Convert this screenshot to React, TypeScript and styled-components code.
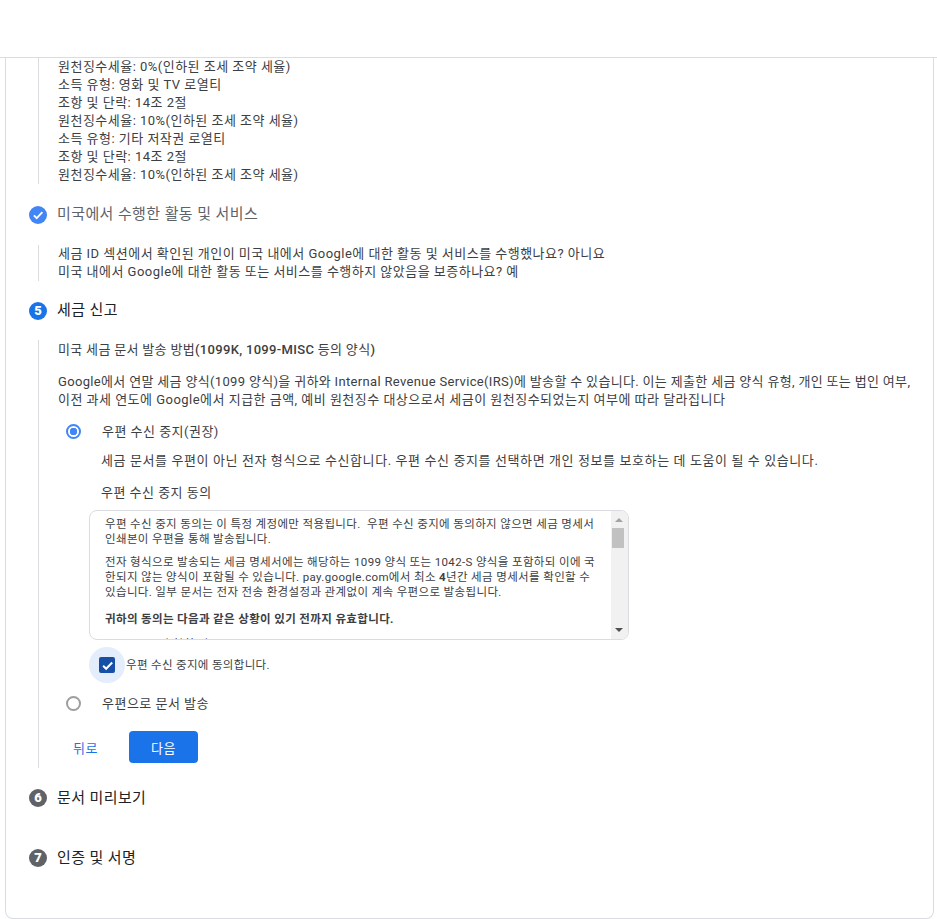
import React from "react";
import styled, { createGlobalStyle } from "styled-components";

const GlobalStyle = createGlobalStyle`
  html, body {
    margin: 0;
    padding: 0;
    background: #fff;
  }
  body {
    font-family: Roboto, "Noto Sans CJK KR", sans-serif;
    font-size: 13px;
    color: #3c4043;
  }
`;

const taxLines = [
  "원천징수세율: 0%(인하된 조세 조약 세율)",
  "소득 유형: 영화 및 TV 로열티",
  "조항 및 단락: 14조 2절",
  "원천징수세율: 10%(인하된 조세 조약 세율)",
  "소득 유형: 기타 저작권 로열티",
  "조항 및 단락: 14조 2절",
  "원천징수세율: 10%(인하된 조세 조약 세율)",
];

const CheckMark = ({ size }: { size: number }) => (
  <svg width={size} height={size} viewBox="0 0 24 24" fill="none">
    <path d="M5 12.5l4.8 4.8L19.5 7.2" stroke="#fff" strokeWidth="3.2" />
  </svg>
);

export default function App() {
  return (
    <Page>
      <GlobalStyle />
      <TopBar />
      <Card>
        <Rail $height={126}>
          {taxLines.map((line, i) => (
            <Line key={i}>{line}</Line>
          ))}
        </Rail>

        <StepHeader $top={22} $bottom={21}>
          <DoneBadge>
            <CheckMark size={14} />
          </DoneBadge>
          <StepTitle $muted>미국에서 수행한 활동 및 서비스</StepTitle>
        </StepHeader>

        <Rail $height={36}>
          <Line>세금 ID 섹션에서 확인된 개인이 미국 내에서 Google에 대한 활동 및 서비스를 수행했나요? 아니요</Line>
          <Line>미국 내에서 Google에 대한 활동 또는 서비스를 수행하지 않았음을 보증하나요? 예</Line>
        </Rail>

        <StepHeader $top={21} $bottom={20}>
          <StepBadge $active>5</StepBadge>
          <StepTitle>세금 신고</StepTitle>
        </StepHeader>

        <RailOpen>
          <SectionHeading>
            미국 세금 문서 발송 방법<Strong>(1099K, 1099-MISC</Strong> 등의 양식<Strong>)</Strong>
          </SectionHeading>
          <Intro>
            <Line $track={0.33}>Google에서 연말 세금 양식(1099 양식)을 귀하와 Internal Revenue Service(IRS)에 발송할 수 있습니다. 이는 제출한 세금 양식 유형, 개인 또는 법인 여부,</Line>
            <Line>이전 과세 연도에 Google에서 지급한 금액, 예비 원천징수 대상으로서 세금이 원천징수되었는지 여부에 따라 달라집니다</Line>
          </Intro>

          <RadioRow>
            <Radio $checked />
            <RadioLabel>우편 수신 중지(권장)</RadioLabel>
          </RadioRow>
          <OptionDetail>
            <Line $track={0.6}>세금 문서를 우편이 아닌 전자 형식으로 수신합니다. 우편 수신 중지를 선택하면 개인 정보를 보호하는 데 도움이 될 수 있습니다.</Line>
            <ConsentTitle>우편 수신 중지 동의</ConsentTitle>
          </OptionDetail>

          <ConsentBox>
            <ConsentText>
              <Para>
                우편 수신 중지 동의는 이 특정 계정에만 적용됩니다.&nbsp; 우편 수신 중지에 동의하지 않으면 세금 명세서
                <br />
                인쇄본이 우편을 통해 발송됩니다.
              </Para>
              <Para>
                전자 형식으로 발송되는 세금 명세서에는 해당하는 1099 양식 또는 1042-S 양식을 포함하되 이에 국
                <br />
                한되지 않는 양식이 포함될 수 있습니다. pay.google.com에서 최소 <b>4</b>년간 세금 명세서를 확인할 수
                <br />
                있습니다. 일부 문서는 전자 전송 환경설정과 관계없이 계속 우편으로 발송됩니다.
              </Para>
              <Para>
                <b>귀하의 동의는 다음과 같은 상황이 있기 전까지 유효합니다.</b>
              </Para>
              <ListItem>동의 철회 및 종료</ListItem>
            </ConsentText>
            <ScrollTrack>
              <ArrowUp />
              <ScrollThumb />
              <ArrowDown />
            </ScrollTrack>
          </ConsentBox>

          <AgreeRow>
            <CheckHalo>
              <CheckBox>
                <CheckMark size={15} />
              </CheckBox>
            </CheckHalo>
            <AgreeLabel>우편 수신 중지에 동의합니다.</AgreeLabel>
          </AgreeRow>

          <RadioRow $second>
            <Radio />
            <RadioLabel>우편으로 문서 발송</RadioLabel>
          </RadioRow>

          <Actions>
            <BackButton>뒤로</BackButton>
            <NextButton>다음</NextButton>
          </Actions>
        </RailOpen>

        <StepHeader $top={21} $bottom={0}>
          <StepBadge>6</StepBadge>
          <StepTitle $low>문서 미리보기</StepTitle>
        </StepHeader>
        <StepHeader $top={42} $bottom={0}>
          <StepBadge>7</StepBadge>
          <StepTitle $low>인증 및 서명</StepTitle>
        </StepHeader>
      </Card>
    </Page>
  );
}

const Page = styled.div`
  width: 937px;
  height: 919px;
  overflow: hidden;
  display: flex;
  flex-direction: column;
`;

const TopBar = styled.header`
  height: 57px;
  flex: none;
  background: #fff;
  border-bottom: 1px solid #dadce0;
`;

const Card = styled.main`
  flex: none;
  width: 929px;
  height: 861px;
  margin-left: 5px;
  box-sizing: border-box;
  border: 1px solid #dadce0;
  border-top: none;
  border-radius: 0 0 8px 8px;
  padding-left: 32px;
`;

const Rail = styled.section<{ $height: number }>`
  height: ${(p) => p.$height}px;
  margin-right: 20px;
  border-left: 1px solid #dadce0;
  padding-left: 19px;
  white-space: nowrap;
`;

const RailOpen = styled.section`
  height: 428px;
  border-left: 1px solid #dadce0;
  padding-left: 19px;
  white-space: nowrap;
`;

const Line = styled.div<{ $track?: number }>`
  font-size: 13px;
  line-height: 18px;
  letter-spacing: ${(p) => p.$track ?? 0.48}px;
  color: #3c4043;
`;

const StepHeader = styled.div<{ $top: number; $bottom: number }>`
  display: flex;
  align-items: center;
  gap: 10px;
  height: 18px;
  margin: ${(p) => p.$top}px 0 ${(p) => p.$bottom}px -9px;
`;

const StepBadge = styled.span<{ $active?: boolean }>`
  flex: none;
  width: 18px;
  height: 18px;
  border-radius: 50%;
  background: ${(p) => (p.$active ? "#1a73e8" : "#5f6368")};
  color: #fff;
  font-size: 13px;
  font-weight: 900;
  line-height: 18px;
  text-align: center;
`;

const DoneBadge = styled.span`
  flex: none;
  width: 18px;
  height: 18px;
  border-radius: 50%;
  background: #4285f4;
  display: flex;
  align-items: center;
  justify-content: center;
`;

const StepTitle = styled.span<{ $muted?: boolean; $low?: boolean }>`
  padding-bottom: ${(p) => (p.$low ? 0 : 2)}px;
  font-size: 15px;
  line-height: 18px;
  letter-spacing: 0.4px;
  color: ${(p) => (p.$muted ? "#5f6368" : "#202124")};
`;

const SectionHeading = styled.h3`
  margin: 0;
  padding-top: 1px;
  font-size: 13px;
  font-weight: 400;
  line-height: 18px;
  letter-spacing: 0.32px;
  color: #3c4043;
`;

const Strong = styled.span`
  font-weight: 500;
`;

const Intro = styled.div`
  margin-top: 14px;
`;

const RadioRow = styled.div<{ $second?: boolean }>`
  display: flex;
  align-items: center;
  height: 18px;
  margin-top: ${(p) => (p.$second ? 11 : 13)}px;
  padding-left: 7.5px;
`;

const Radio = styled.span<{ $checked?: boolean }>`
  flex: none;
  box-sizing: border-box;
  width: 15px;
  height: 15px;
  border-radius: 50%;
  border: 2px solid ${(p) => (p.$checked ? "#4285f4" : "#9e9e9e")};
  background: ${(p) => (p.$checked ? "radial-gradient(circle, #4285f4 0 3.5px, #fff 4px)" : "#fff")};
`;

const RadioLabel = styled.span`
  margin-left: 21.5px;
  padding-bottom: 2px;
  font-size: 13px;
  letter-spacing: 0.48px;
  color: #3c4043;
`;

const OptionDetail = styled.div`
  margin: 12px 0 0 43px;
`;

const ConsentTitle = styled.div`
  margin-top: 14px;
  font-size: 13px;
  line-height: 18px;
  letter-spacing: 0.48px;
  color: #3c4043;
`;

const ConsentBox = styled.div`
  display: flex;
  width: 540px;
  height: 130px;
  box-sizing: border-box;
  margin: 8px 0 0 31px;
  border: 1px solid #dadce0;
  border-radius: 8px;
  overflow: hidden;
`;

const ConsentText = styled.div`
  flex: 1;
  overflow: hidden;
  padding: 6px 0 0 15px;
  font-size: 11.5px;
  line-height: 15px;
  letter-spacing: 0.36px;
  color: #3c4043;
`;

const Para = styled.p`
  margin: 0 0 8px;

  b {
    font-weight: 700;
  }

  &:nth-child(3) {
    margin-top: 12px;
  }
`;

const ListItem = styled.p`
  margin: 10px 0 0;
  padding-left: 26px;
  display: list-item;
  list-style: disc inside;
`;

const ScrollTrack = styled.div`
  flex: none;
  position: relative;
  width: 17px;
  background: #f1f1f1;
`;

const ArrowUp = styled.span`
  position: absolute;
  top: 7px;
  left: 4px;
  border: 4px solid transparent;
  border-top: none;
  border-bottom: 4px solid #a3a3a3;
`;

const ArrowDown = styled.span`
  position: absolute;
  bottom: 7px;
  left: 4px;
  border: 4px solid transparent;
  border-bottom: none;
  border-top: 4px solid #505050;
`;

const ScrollThumb = styled.span`
  position: absolute;
  top: 17px;
  left: 1px;
  width: 12px;
  height: 20px;
  background: #c1c1c1;
`;

const AgreeRow = styled.div`
  display: flex;
  align-items: center;
  height: 36px;
  margin: 7px 0 0 31px;
`;

const CheckHalo = styled.span`
  flex: none;
  width: 36px;
  height: 36px;
  border-radius: 50%;
  background: #e3edfb;
  display: flex;
  align-items: center;
  justify-content: center;
`;

const CheckBox = styled.span`
  width: 16px;
  height: 16px;
  border-radius: 2px;
  background: #174ea6;
  display: flex;
  align-items: center;
  justify-content: center;
`;

const AgreeLabel = styled.label`
  margin-left: 1px;
  padding-bottom: 2px;
  font-size: 11.5px;
  letter-spacing: 0.33px;
  color: #3c4043;
`;

const Actions = styled.div`
  display: flex;
  align-items: center;
  margin-top: 19px;
  padding-left: 15px;
`;

const BackButton = styled.button`
  border: none;
  background: none;
  padding: 0;
  width: 56px;
  text-align: left;
  font: inherit;
  font-size: 13px;
  letter-spacing: 0.48px;
  color: #1a73e8;
`;

const NextButton = styled.button`
  border: none;
  width: 69px;
  height: 32px;
  border-radius: 4px;
  background: #1a73e8;
  color: #fff;
  font: inherit;
  font-size: 13px;
  letter-spacing: 0.48px;
`;
